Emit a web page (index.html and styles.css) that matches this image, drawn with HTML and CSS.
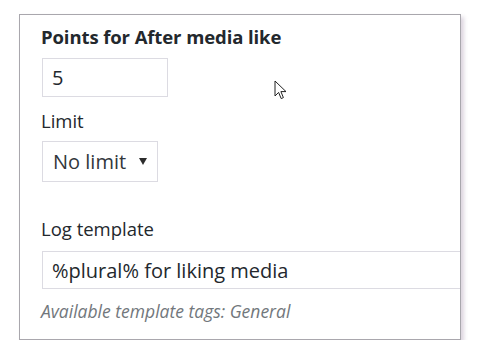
FILE: index.html
```html
<!DOCTYPE html>
<html lang="en">
<head>
  <meta charset="UTF-8">
  <title>Points settings</title>
  <link rel="stylesheet" href="styles.css">
</head>
<body>

  <div class="panel">
    <div class="field">
      <label class="title">Points for After media like</label>
      <div class="input small">5</div>
    </div>

    <div class="field">
      <label class="label">Limit</label>
      <div class="select">
        <span>No limit</span>
        <svg class="arrow" width="8" height="7" viewBox="0 0 8 7">
          <polygon points="0,0 8,0 4,7" fill="#2c2c2c"/>
        </svg>
      </div>
    </div>

    <div class="field log">
      <label class="label">Log template</label>
      <div class="input wide">%plural% for liking media</div>
      <p class="hint">Available template tags: General</p>
    </div>
  </div>

  <!-- curseur de la souris -->
  <svg class="cursor" width="14" height="21" viewBox="0 0 14 21">
    <path d="M1 1 L1 16 L4.6 12.4 L7.2 18.6 L9.4 17.6 L6.9 11.6 L12 11.6 Z"
          fill="#fff" stroke="#222" stroke-width="1" stroke-linejoin="round"/>
  </svg>

</body>
</html>
```

FILE: styles.css
```css
body {
  margin: 0;
  font-family: "Open Sans", "Noto Sans", sans-serif;
  background: #fff;
  color: #23282d;
}
.panel {
  margin: 14px 0 0 19px;
  width: 442px;
  height: 326px;
  border: 1px solid #a9a7ad;
  box-shadow: 3px 3px 4px rgba(205, 195, 210, 0.7);
  padding: 0 0 0 21px;
  box-sizing: border-box;
  overflow: hidden;
}
.field {
  display: flex;
  flex-direction: column;
  align-items: flex-start;
}
.title {
  font-weight: bold;
  font-size: 18.5px;
  line-height: 24px;
  margin-top: 10px;
  letter-spacing: -0.1px;
}
.label {
  font-size: 18.5px;
  line-height: 24px;
  margin-top: 12px;
}
.input {
  border: 1px solid #dcdbe2;
  box-sizing: border-box;
  font-size: 20px;
  padding: 1px 9px 0;
  margin-left: 1px;
  white-space: nowrap;
}
.small {
  width: 126px;
  height: 39px;
  line-height: 36px;
  margin-top: 9px;
}
.select {
  width: 116px;
  height: 41px;
  margin-top: 8px;
  margin-left: 1px;
  border: 1px solid #dcdbe2;
  box-sizing: border-box;
  display: flex;
  align-items: center;
  justify-content: space-between;
  padding: 0 10px 0 10px;
  font-size: 20px;
  color: #32373c;
}
.arrow {
  margin-top: -1px;
}
.log .label {
  margin-top: 35px;
}
.wide {
  width: 430px;
  height: 38px;
  line-height: 35px;
  margin-top: 10px;
}
.hint {
  margin: 11px 0 0;
  font-size: 17.5px;
  line-height: 22px;
  font-style: italic;
  color: #72777c;
}
.cursor {
  position: absolute;
  left: 274px;
  top: 80px;
}
```
